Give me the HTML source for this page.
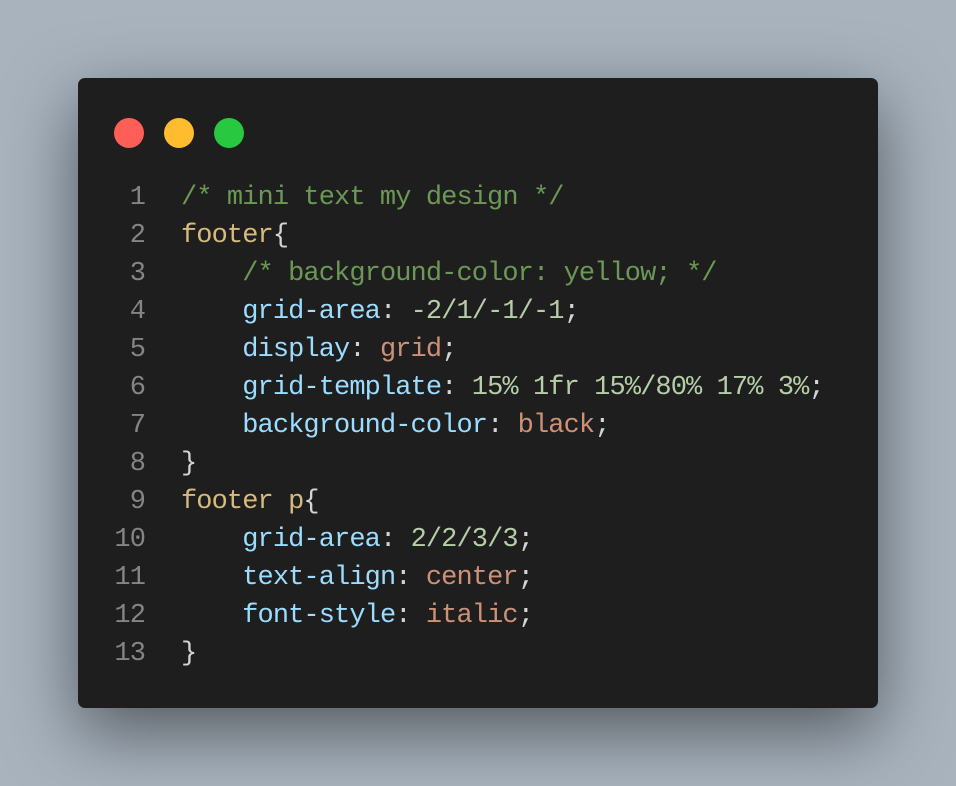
<!DOCTYPE html>
<html><head><style>
html,body{margin:0;padding:0;}
body{width:956px;height:786px;background:#a8b3be;position:relative;overflow:hidden;}
.win{position:absolute;left:78px;top:78px;width:800px;height:630px;background:#1e1e1e;border-radius:7px;box-shadow:0 24px 70px rgba(0,0,0,0.5);}
.dot{position:absolute;top:40px;width:30px;height:30px;border-radius:50%;}
.code{position:absolute;left:0;top:101px;font-family:"Liberation Mono",monospace;font-size:27px;letter-spacing:-0.9px;line-height:38px;white-space:pre;color:#d4d4d4;}
.ln{display:inline-block;width:67px;text-align:right;color:#858585;margin-right:36px;}
.c{color:#6a9955}.s{color:#d7ba7d}.p{color:#9cdcfe}.v{color:#ce9178}.n{color:#b5cea8}
</style></head><body>
<div class="win">
<div class="dot" style="left:36px;background:#ff5f57"></div>
<div class="dot" style="left:86px;background:#febc2e"></div>
<div class="dot" style="left:136px;background:#28c840"></div>
<div class="code"><div><span class="ln">1</span><span class="c">/* mini text my design */</span></div><div><span class="ln">2</span><span class="s">footer</span>{</div><div><span class="ln">3</span>    <span class="c">/* background-color: yellow; */</span></div><div><span class="ln">4</span>    <span class="p">grid-area</span>: <span class="n">-2/1/-1/-1</span>;</div><div><span class="ln">5</span>    <span class="p">display</span>: <span class="v">grid</span>;</div><div><span class="ln">6</span>    <span class="p">grid-template</span>: <span class="n">15% 1fr 15%/80% 17% 3%</span>;</div><div><span class="ln">7</span>    <span class="p">background-color</span>: <span class="v">black</span>;</div><div><span class="ln">8</span>}</div><div><span class="ln">9</span><span class="s">footer p</span>{</div><div><span class="ln">10</span>    <span class="p">grid-area</span>: <span class="n">2/2/3/3</span>;</div><div><span class="ln">11</span>    <span class="p">text-align</span>: <span class="v">center</span>;</div><div><span class="ln">12</span>    <span class="p">font-style</span>: <span class="v">italic</span>;</div><div><span class="ln">13</span>}</div></div>
</div>
</body></html>
